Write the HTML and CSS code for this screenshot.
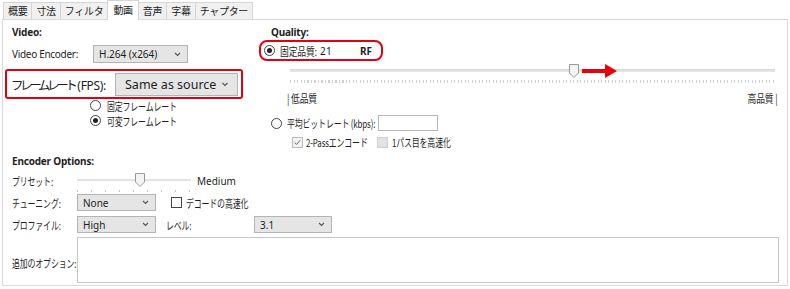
FILE: index.html
```html
<!DOCTYPE html>
<html lang="ja">
<head>
<meta charset="utf-8">
<title>動画</title>
<link rel="stylesheet" href="styles.css">
</head>
<body>
<div class="tabs">
  <div class="tab">概要</div>
  <div class="tab">寸法</div>
  <div class="tab">フィルタ</div>
  <div class="tab active">動画</div>
  <div class="tab">音声</div>
  <div class="tab">字幕</div>
  <div class="tab">チャプター</div>
</div>
<div class="panel">
  <div class="top">
    <div class="left">
      <div class="heading">Video:</div>
      <div class="enc-row">
        <span class="lbl-enc">Video Encoder:</span>
        <div class="select sel-enc"><span>H.264 (x264)</span><svg class="chev" viewBox="0 0 7 5"><path d="M1 1 L3.5 3.5 L6 1" fill="none" stroke="#555" stroke-width="1.1"/></svg></div>
      </div>
      <div class="fps-box">
        <span class="fps-lbl"><span class="fps-kana">フレームレート</span>(FPS):</span>
        <div class="select sel-fps"><span>Same as source</span><svg class="chev" viewBox="0 0 7 5"><path d="M1 1 L3.5 3.5 L6 1" fill="none" stroke="#555" stroke-width="1.1"/></svg></div>
      </div>
      <div class="radio-row"><span class="radio"></span><span class="jp">固定フレームレート</span></div>
      <div class="radio-row"><span class="radio checked"></span><span class="jp">可変フレームレート</span></div>
    </div>
    <div class="right">
      <div class="heading q-head">Quality:</div>
      <div class="rf-box">
        <span class="radio checked"></span>
        <span class="rf-lbl jp">固定品質:</span>
        <span class="rf-val">21</span>
        <span class="rf-unit">RF</span>
      </div>
      <div class="q-slider">
        <div class="track"></div>
        <svg class="thumb q-thumb" viewBox="0 0 10 14"><path d="M0.5 0.5 H9.5 V9 L5 13.5 L0.5 9 Z" fill="#f4f4f4" stroke="#9a9a9a"/></svg>
        <svg class="arrow" viewBox="0 0 36 14"><path d="M0 5 H23 V0 L35 7 L23 14 V9 H0 Z" fill="#e8000b"/></svg>
        <div class="ticks q-ticks"></div>
      </div>
      <div class="q-labels"><span class="jp q-lo">| 低品質</span><span class="jp q-hi">高品質 |</span></div>
      <div class="abr-row">
        <span class="radio"></span>
        <span class="abr-lbl jp">平均ビットレート (kbps):</span>
        <div class="input"></div>
      </div>
      <div class="cb-row">
        <span class="check disabled checked"><svg viewBox="0 0 11 11"><path d="M2 5.5 L4.3 7.8 L8.8 2.8" fill="none" stroke="#6a6a6a" stroke-width="1.2"/></svg></span>
        <span class="cb-lbl jp">2-Passエンコード</span>
        <span class="check grey"></span>
        <span class="jp">1パス目を高速化</span>
      </div>
    </div>
  </div>
  <div class="opts">
    <div class="heading">Encoder Options:</div>
    <div class="opt-row preset-row">
      <span class="opt-lbl jp">プリセット:</span>
      <div class="p-slider">
        <div class="track"></div>
        <svg class="thumb p-thumb" viewBox="0 0 10 14"><path d="M0.5 0.5 H9.5 V9 L5 13.5 L0.5 9 Z" fill="#f4f4f4" stroke="#9a9a9a"/></svg>
        <div class="ticks p-ticks"></div>
      </div>
      <span class="medium">Medium</span>
    </div>
    <div class="opt-row">
      <span class="opt-lbl jp">チューニング:</span>
      <div class="select sel-small"><span>None</span><svg class="chev" viewBox="0 0 7 5"><path d="M1 1 L3.5 3.5 L6 1" fill="none" stroke="#555" stroke-width="1.1"/></svg></div>
      <span class="check dec-check"></span>
      <span class="jp">デコードの高速化</span>
    </div>
    <div class="opt-row">
      <span class="opt-lbl jp">プロファイル:</span>
      <div class="select sel-small"><span>High</span><svg class="chev" viewBox="0 0 7 5"><path d="M1 1 L3.5 3.5 L6 1" fill="none" stroke="#555" stroke-width="1.1"/></svg></div>
      <span class="lvl-lbl jp">レベル:</span>
      <div class="select sel-lvl"><span>3.1</span><svg class="chev" viewBox="0 0 7 5"><path d="M1 1 L3.5 3.5 L6 1" fill="none" stroke="#555" stroke-width="1.1"/></svg></div>
    </div>
    <div class="extra-row">
      <span class="extra-lbl jp">追加のオプション:</span>
      <div class="textarea"></div>
    </div>
  </div>
</div>
</body>
</html>
```

FILE: styles.css
```css
* { box-sizing: border-box; }

body {
  margin: 0;
  width: 790px;
  height: 289px;
  background: #ffffff;
  font-family: "Noto Sans", "Noto Sans CJK JP", sans-serif;
  font-size: 10px;
  color: #1e1e1e;
  overflow: hidden;
  white-space: nowrap;
}

.jp {
  display: inline-block;
  font-family: "Noto Sans CJK JP", sans-serif;
  font-size: 11px;
  letter-spacing: -0.2px;
  transform: scaleX(0.72);
  transform-origin: left center;
  flex: none;
}

/* tabs */
.tabs {
  display: flex;
  align-items: flex-end;
  height: 19px;
  padding-left: 3px;
}
.tab {
  height: 17px;
  line-height: 15px;
  padding: 0 4px;
  border: 1px solid #d4d4d4;
  border-bottom: none;
  background: #f0f0f0;
  margin-right: -1px;
  font-family: "Noto Sans CJK JP", sans-serif;
  font-size: 10px;
  letter-spacing: -0.3px;
  color: #222;
}
.tab.active {
  height: 20px;
  line-height: 18px;
  background: #ffffff;
  position: relative;
  z-index: 1;
  margin-bottom: -1px;
  padding: 0 5px;
}

/* panel */
.panel {
  margin-left: 2px;
  width: 786px;
  height: 267px;
  border: 1px solid #d9d9d9;
}

.top { display: flex; }
.left { width: 256px; flex: none; }
.right { flex: 1; }

.heading {
  margin-top: 5px;
  height: 14px;
  line-height: 14px;
  padding-left: 9px;
  font-weight: 700;
  font-size: 10px;
  letter-spacing: -0.2px;
}
.q-head { padding-left: 12px; }

/* select */
.select {
  display: flex;
  align-items: center;
  justify-content: space-between;
  background: #e5e5e5;
  border: 1px solid #b4b4b4;
  padding: 0 6px 0 5px;
  flex: none;
}
.chev { width: 7px; height: 5px; }

.enc-row {
  display: flex;
  align-items: center;
  margin-top: 6px;
  height: 18px;
}
.lbl-enc { width: 90px; padding-left: 9px; letter-spacing: -0.3px; flex: none; }
.sel-enc { width: 95px; height: 18px; }

.fps-box {
  margin-top: 6px;
  margin-left: 2px;
  width: 238px;
  height: 30px;
  border: 2px solid #e3000f;
  border-radius: 3px;
  display: flex;
  align-items: center;
}
.fps-lbl {
  width: 108px;
  flex: none;
  padding-left: 4px;
  font-size: 12px;
  letter-spacing: -0.3px;
}
.fps-kana {
  font-family: "Noto Sans CJK JP", sans-serif;
  font-size: 12.5px;
  letter-spacing: -3.4px;
  margin-right: 3px;
}
.sel-fps {
  width: 123px;
  height: 23px;
  font-size: 12.5px;
  padding: 0 8px 0 9px;
}
.sel-fps .chev { width: 8px; }

.radio-row {
  display: flex;
  align-items: center;
  height: 15px;
  padding-left: 87px;
  gap: 6px;
}
.fps-box + .radio-row { margin-top: -1px; }

.radio {
  width: 11px;
  height: 11px;
  border: 1px solid #444;
  border-radius: 50%;
  background: #fff;
  display: flex;
  align-items: center;
  justify-content: center;
  flex: none;
}
.radio.checked::after {
  content: "";
  width: 5px;
  height: 5px;
  border-radius: 50%;
  background: #222;
}

/* quality */
.rf-box {
  margin-top: 1px;
  width: 124px;
  height: 21px;
  border: 2px solid #e3000f;
  border-radius: 8px;
  display: flex;
  align-items: center;
  padding-left: 3px;
}
.rf-lbl { margin-left: 5px; width: 40px; transform: scaleX(0.8); }
.rf-val { width: 40px; flex: none; letter-spacing: 0.3px; }
.rf-unit { font-weight: 700; }

.q-slider {
  position: relative;
  margin-left: 31px;
  width: 485px;
  height: 24px;
  margin-top: 2px;
}
.track {
  position: absolute;
  left: 0;
  right: 0;
  top: 6px;
  height: 3px;
  background: #e4e4e4;
  border-top: 1px solid #d8d8d8;
}
.ticks {
  position: absolute;
  left: 0;
  right: 0;
  height: 3px;
}
.q-ticks {
  top: 17px;
  background: repeating-linear-gradient(90deg, #cfcfcf 0 1px, transparent 1px 3.5px);
}
.thumb {
  position: absolute;
  width: 10px;
  height: 14px;
}
.q-thumb { left: 279px; top: 1px; }
.arrow {
  position: absolute;
  left: 292px;
  top: 1px;
  width: 36px;
  height: 14px;
}

.q-labels {
  margin-left: 28px;
  width: 490px;
  margin-top: 4px;
  height: 14px;
  line-height: 14px;
  display: flex;
  justify-content: space-between;
}
.q-labels .jp { transform: scaleX(0.8); }
.q-labels .q-hi { transform-origin: right center; }

.abr-row {
  display: flex;
  align-items: center;
  margin-top: 10px;
  margin-left: 12px;
  height: 16px;
}
.abr-lbl { margin-left: 5px; width: 91px; }
.input {
  width: 60px;
  height: 16px;
  border: 1px solid #b8b8b8;
  background: #fff;
  flex: none;
}

.cb-row {
  display: flex;
  align-items: center;
  margin-top: 4px;
  margin-left: 33px;
  height: 14px;
}
.check {
  width: 11px;
  height: 11px;
  border: 1px solid #444;
  background: #fff;
  flex: none;
  display: flex;
}
.check svg { width: 9px; height: 9px; }
.check.disabled { border-color: #bcbcbc; background: #f2f2f2; }
.check.grey { border-color: #cfcfcf; background: #e2e2e2; margin-right: 4px; }
.cb-lbl { margin-left: 3px; width: 71px; }

/* encoder options */
.opts { margin-top: 1px; }

.opt-row {
  display: flex;
  align-items: center;
  height: 17px;
  margin-top: 5px;
  padding-left: 9px;
}
.preset-row { margin-top: 5px; height: 16px; }
.opt-lbl { width: 65px; }

.p-slider {
  position: relative;
  width: 114px;
  height: 20px;
  margin-top: 4px;
  flex: none;
}
.p-slider .track { top: 6px; height: 2px; background: #e2e2e2; border-top: none; }
.p-thumb { left: 58px; top: 0; }
.p-ticks {
  top: 17px;
  height: 2px;
  background: repeating-linear-gradient(90deg, #c4c4c4 0 1px, transparent 1px 14px);
}
.medium { margin-left: 6px; }

.sel-small { width: 79px; height: 17px; }
.dec-check { margin-left: 15px; margin-right: 4px; }
.lvl-lbl { margin-left: 10px; width: 88px; }
.sel-lvl { width: 78px; height: 17px; }

.extra-row {
  display: flex;
  align-items: center;
  margin-top: 4px;
  padding-left: 9px;
}
.extra-lbl { width: 65px; padding-top: 6px; }
.textarea {
  width: 702px;
  height: 46px;
  border: 1px solid #c8c8c8;
  background: #fff;
  flex: none;
}
```
